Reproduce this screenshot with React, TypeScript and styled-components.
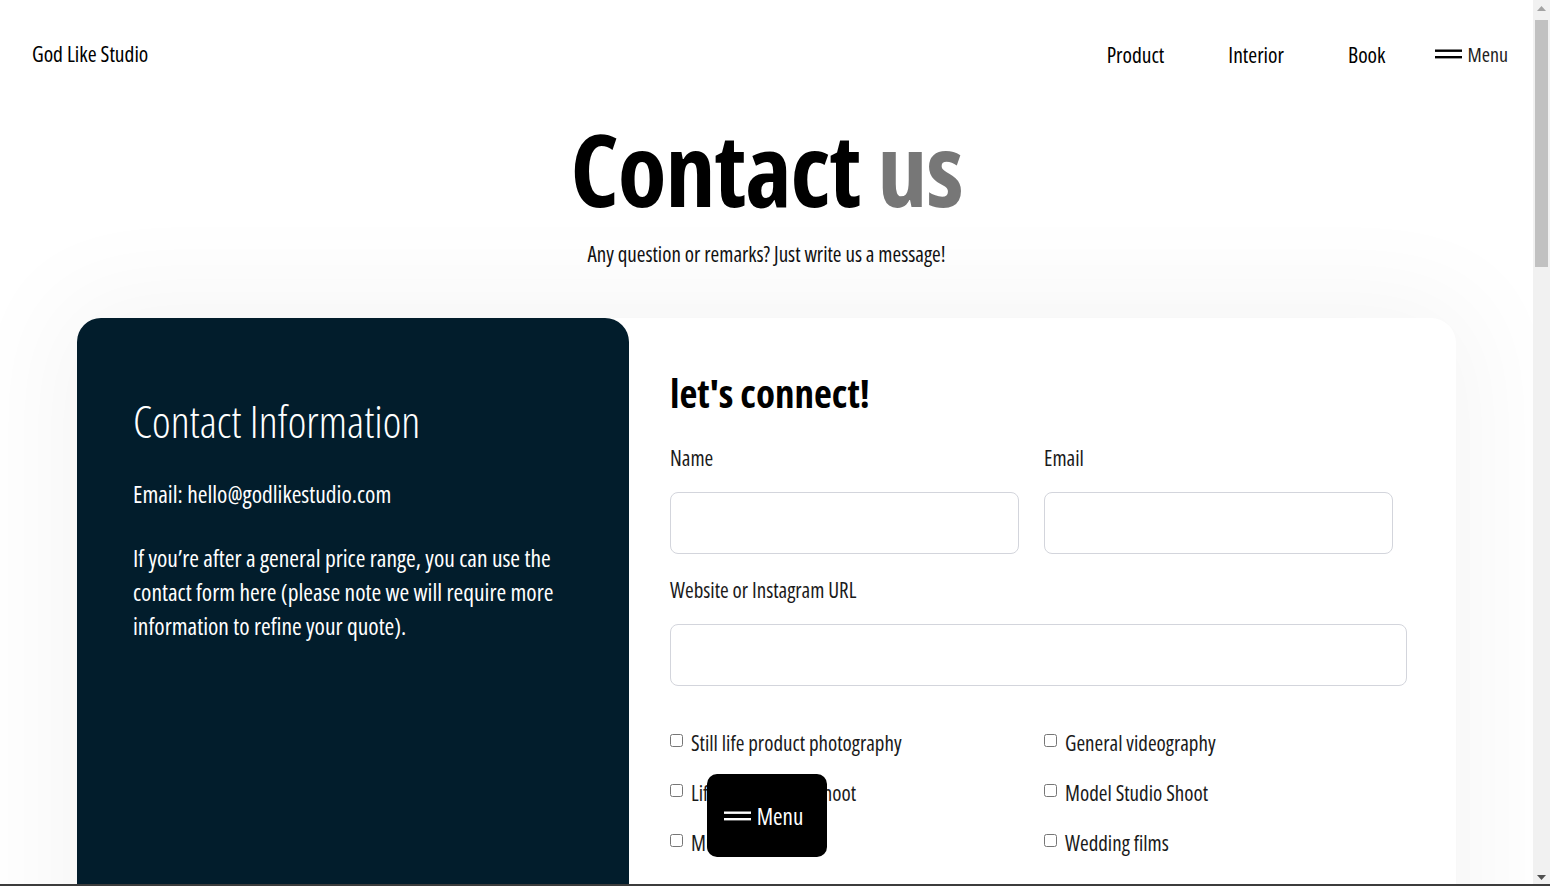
import React from "react";
import styled, { createGlobalStyle } from "styled-components";

const GlobalStyle = createGlobalStyle`
  html, body { margin: 0; padding: 0; background: #ffffff; }
  body {
    font-family: "Open Sans", "Noto Sans", sans-serif;
    font-stretch: 75%;
    color: #000;
  }
  * { box-sizing: border-box; }
`;

const Page = styled.div`
  width: calc(100% - 17px);
  min-height: 1800px;
  overflow: hidden;
`;

const Header = styled.header`
  display: flex;
  align-items: center;
  justify-content: space-between;
  height: 106px;
  padding: 0 25px 0 32px;
`;

const Logo = styled.div`
  font-size: 21.5px;
  font-weight: 500;
  color: #000;
`;

const Nav = styled.nav`
  display: flex;
  align-items: center;
  gap: 64px;
  padding-top: 2px;
`;

const NavLink = styled.a`
  font-size: 21.5px;
  font-weight: 500;
  color: #000;
  text-decoration: none;
`;

const MenuToggle = styled.button`
  display: flex;
  align-items: center;
  gap: 5px;
  margin-left: -14px;
  background: none;
  border: none;
  padding: 0;
  font-family: inherit;
  font-stretch: 75%;
  font-size: 20px;
  font-weight: 400;
  color: #222;
`;

const Hero = styled.section`
  display: flex;
  flex-direction: column;
  align-items: center;
`;

const Title = styled.h1`
  margin: 12px 0 0;
  font-size: 100px;
  font-weight: 700;
  line-height: 1;
  letter-spacing: -1px;
  color: #000;
`;

const Muted = styled.span`
  color: #777777;
`;

const Subtitle = styled.p`
  margin: 22px 0 0;
  font-size: 21px;
  font-weight: 400;
  color: #111;
`;

const Card = styled.section`
  margin: 50px 77px 0;
  display: grid;
  grid-template-columns: 552px 1fr;
  background: #ffffff;
  border-radius: 22px 25px 25px 22px;
  box-shadow: 0 0 110px 20px rgba(0, 0, 0, 0.045);
  min-height: 900px;
`;

const InfoPanel = styled.div`
  background: #021d2c;
  border-radius: 24px;
  padding: 76px 56px 0;
  color: #ffffff;
`;

const InfoTitle = styled.h2`
  margin: 0 0 30px;
  font-size: 44.5px;
  font-weight: 300;
  line-height: 1.2;
`;

const InfoText = styled.p`
  margin: 0 0 30px;
  font-size: 23.5px;
  font-weight: 400;
  line-height: 34px;
`;

const Form = styled.form`
  padding: 52px 0 0 41px;
  display: flex;
  flex-direction: column;
`;

const FormTitle = styled.h3`
  margin: 0 0 27px;
  font-size: 39px;
  font-weight: 700;
  line-height: 1.2;
`;

const FieldRow = styled.div`
  display: grid;
  grid-template-columns: 349px 349px;
  column-gap: 25px;
`;

const Field = styled.label<{ $wide?: boolean }>`
  display: flex;
  flex-direction: column;
  width: ${(p) => (p.$wide ? "737px" : "auto")};
  margin-bottom: 22px;
`;

const LabelText = styled.span`
  font-size: 21px;
  font-weight: 400;
  color: #1a1a1a;
  line-height: 28px;
  margin-bottom: 20px;
`;

const Input = styled.input`
  height: 62px;
  border: 1px solid #d3d5dc;
  border-radius: 8px;
  background: #fff;
  font-family: inherit;
  font-size: 18px;
  padding: 0 16px;
`;

const TextArea = styled.textarea`
  height: 140px;
  border: 1px solid #d3d5dc;
  border-radius: 8px;
  background: #fff;
  font-family: inherit;
  padding: 16px;
  resize: none;
`;

const CheckGrid = styled.div`
  display: grid;
  grid-template-columns: 374px 374px;
  row-gap: 22px;
  margin-top: 21px;
  margin-bottom: 40px;
`;

const CheckItem = styled.label`
  display: flex;
  align-items: center;
  gap: 8px;
  font-size: 21px;
  line-height: 28px;
  color: #1a1a1a;
`;

const Box = styled.input`
  width: 13px;
  height: 13px;
  margin: 0 0 4px;
`;

const Submit = styled.button`
  align-self: flex-start;
  margin-top: 30px;
  background: #021d2c;
  color: #fff;
  border: none;
  border-radius: 8px;
  padding: 16px 40px;
  font-family: inherit;
  font-stretch: 75%;
  font-size: 20px;
`;

const FloatingMenu = styled.button`
  position: fixed;
  left: 707px;
  top: 774px;
  width: 120px;
  height: 83px;
  padding: 0 7px 0 0;
  background: #000;
  border: none;
  border-radius: 10px;
  display: flex;
  align-items: center;
  justify-content: center;
  gap: 6px;
  color: #fff;
  font-family: inherit;
  font-stretch: 75%;
  font-size: 23px;
  font-weight: 400;
  z-index: 10;
`;

/* Imitation of the browser's classic scrollbar, which lies over the page's right edge */
const ScrollTrack = styled.div`
  position: fixed;
  top: 0;
  right: 0;
  width: 17px;
  height: 100vh;
  background: #f1f1f1;
  z-index: 20;
  display: flex;
  flex-direction: column;
  align-items: center;
`;

const ScrollArrow = styled.div`
  height: 17px;
  width: 17px;
  display: flex;
  align-items: center;
  justify-content: center;
`;

const ScrollThumb = styled.div`
  width: 13px;
  height: 247px;
  margin-top: 3px;
  background: #c1c1c1;
`;

const ScrollSpacer = styled.div`
  flex: 1;
`;

const BottomEdge = styled.div`
  position: fixed;
  left: 0;
  right: 0;
  bottom: 0;
  height: 2px;
  background: #3c3c3c;
  z-index: 21;
`;

const Burger = ({ color }: { color: string }) => (
  <svg width="27" height="10" viewBox="0 0 27 10" aria-hidden="true">
    <rect x="0" y="0.5" width="27" height="2.4" fill={color} />
    <rect x="0" y="7" width="27" height="2.4" fill={color} />
  </svg>
);

const Tri = ({ up }: { up?: boolean }) => (
  <svg width="9" height="5" viewBox="0 0 9 5" aria-hidden="true">
    <path d={up ? "M0 5 L4.5 0 L9 5 Z" : "M0 0 L9 0 L4.5 5 Z"} fill={up ? "#a3a3a3" : "#505050"} />
  </svg>
);

const leftChecks = ["Still life product photography", "Lifestyle Product Shoot", "Music videos"];
const rightChecks = ["General videography", "Model Studio Shoot", "Wedding films"];

export default function App() {
  return (
    <Page>
      <GlobalStyle />
      <Header>
        <Logo>God Like Studio</Logo>
        <Nav>
          <NavLink href="#">Product</NavLink>
          <NavLink href="#">Interior</NavLink>
          <NavLink href="#">Book</NavLink>
          <MenuToggle type="button">
            <Burger color="#000" />
            Menu
          </MenuToggle>
        </Nav>
      </Header>

      <Hero>
        <Title>
          Contact <Muted>us</Muted>
        </Title>
        <Subtitle>Any question or remarks? Just write us a message!</Subtitle>
      </Hero>

      <Card>
        <InfoPanel>
          <InfoTitle>Contact Information</InfoTitle>
          <InfoText>Email: hello@godlikestudio.com</InfoText>
          <InfoText>
            If you’re after a general price range, you can use the contact form here (please
            note we will require more information to refine your quote).
          </InfoText>
        </InfoPanel>

        <Form onSubmit={(e) => e.preventDefault()}>
          <FormTitle>let's connect!</FormTitle>
          <FieldRow>
            <Field>
              <LabelText>Name</LabelText>
              <Input type="text" />
            </Field>
            <Field>
              <LabelText>Email</LabelText>
              <Input type="email" />
            </Field>
          </FieldRow>
          <Field $wide>
            <LabelText>Website or Instagram URL</LabelText>
            <Input type="text" />
          </Field>
          <CheckGrid>
            {leftChecks.map((l, i) => (
              <React.Fragment key={l}>
                <CheckItem>
                  <Box type="checkbox" />
                  {l}
                </CheckItem>
                <CheckItem>
                  <Box type="checkbox" />
                  {rightChecks[i]}
                </CheckItem>
              </React.Fragment>
            ))}
          </CheckGrid>
          <Field $wide>
            <LabelText>Message</LabelText>
            <TextArea />
          </Field>
          <Submit type="submit">Send Message</Submit>
        </Form>
      </Card>

      <FloatingMenu type="button">
        <Burger color="#fff" />
        Menu
      </FloatingMenu>

      <ScrollTrack aria-hidden="true">
        <ScrollArrow>
          <Tri up />
        </ScrollArrow>
        <ScrollThumb />
        <ScrollSpacer />
        <ScrollArrow>
          <Tri />
        </ScrollArrow>
      </ScrollTrack>
      <BottomEdge />
    </Page>
  );
}
